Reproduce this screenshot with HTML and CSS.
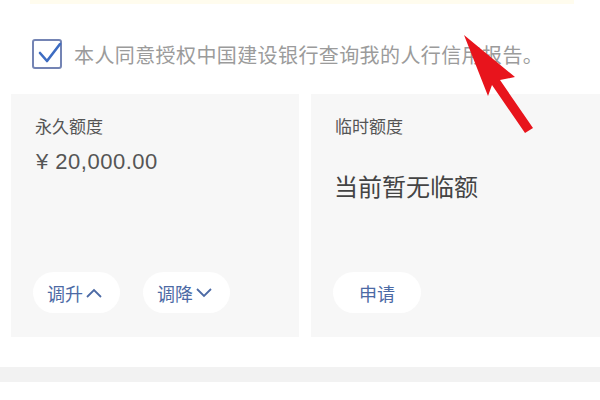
FILE: index.html
```html
<!DOCTYPE html>
<html lang="zh">
<head>
<meta charset="utf-8">
<link rel="stylesheet" href="styles.css">
</head>
<body>
<div class="page">
  <div class="topbar"></div>
  <div class="agree">
    <span class="checkbox">
      <svg width="34" height="34" viewBox="0 0 34 34"><path d="M7 15 L14 23 L27 6" fill="none" stroke="#3d6cc2" stroke-width="2.6" stroke-linecap="round" stroke-linejoin="round"/></svg>
    </span>
    <span class="agree-text">本人同意授权中国建设银行查询我的人行信用报告。</span>
  </div>
  <div class="cards">
    <div class="card">
      <div class="card-title">永久额度</div>
      <div class="amount">¥ 20,000.00</div>
      <div class="actions">
        <span class="pill">调升<svg class="chev" width="18" height="12" viewBox="0 0 18 12"><path d="M2 10 L9 3 L16 10" fill="none" stroke="#4c6aa5" stroke-width="1.8"/></svg></span>
        <span class="pill">调降<svg class="chev" width="18" height="12" viewBox="0 0 18 12"><path d="M2 2 L9 9 L16 2" fill="none" stroke="#4c6aa5" stroke-width="1.8"/></svg></span>
      </div>
    </div>
    <div class="card">
      <div class="card-title">临时额度</div>
      <div class="none-text">当前暂无临额</div>
      <div class="actions">
        <span class="pill pill-center">申请</span>
      </div>
    </div>
  </div>
  <div class="divider"></div>
  <svg class="arrow" width="600" height="400" viewBox="0 0 600 400">
    <polygon points="464,35 515,77 500,80 533,128 525,133 492,85 488,96" fill="#e8141c"/>
  </svg>
</div>
</body>
</html>
```
FILE: styles.css
```css
html, body {
  margin: 0;
  padding: 0;
  background: #ffffff;
}
body {
  font-family: "Noto Sans CJK SC", "Noto Sans", sans-serif;
  width: 600px;
  height: 400px;
  overflow: hidden;
}
.page {
  position: relative;
  width: 600px;
  height: 400px;
}
.topbar {
  height: 4px;
  margin: 0 26px 0 30px;
  background: #fffcee;
}
.agree {
  display: flex;
  align-items: center;
  margin-top: 35px;
  padding-left: 32px;
  height: 30px;
}
.checkbox {
  position: relative;
  width: 26px;
  height: 26px;
  border: 2px solid #7484b4;
  border-radius: 3px;
  flex: none;
}
.checkbox svg {
  position: absolute;
  left: -1px;
  top: -3px;
}
.agree-text {
  margin-left: 12px;
  font-size: 20px;
  color: #9b9b9b;
  letter-spacing: 0.4px;
}
.cards {
  display: flex;
  gap: 12px;
  margin-top: 25px;
  padding-left: 11px;
}
.card {
  flex: 1;
  height: 243px;
  background: #f7f7f7;
  display: flex;
  flex-direction: column;
  padding: 20px 22px 24px;
  box-sizing: border-box;
}
.card:last-child {
  flex: none;
  width: 289px;
}
.card-title {
  font-size: 17px;
  line-height: 24px;
  color: #555555;
  margin-left: 2px;
}
.amount {
  margin-top: 10px;
  margin-left: 3px;
  font-family: "Liberation Sans", "Roboto", sans-serif;
  font-size: 22px;
  line-height: 28px;
  letter-spacing: 0.5px;
  color: #555555;
}
.none-text {
  margin-top: 32px;
  margin-left: 1px;
  font-size: 24px;
  line-height: 32px;
  color: #444444;
}
.actions {
  margin-top: auto;
  display: flex;
  gap: 23px;
}
.pill {
  display: inline-flex;
  align-items: center;
  height: 41px;
  width: 87px;
  box-sizing: border-box;
  padding-left: 14px;
  border-radius: 21px;
  background: #ffffff;
  font-size: 18px;
  color: #4c6aa5;
}
.chev {
  margin-left: 2px;
}
.pill-center {
  justify-content: center;
  padding-left: 0;
  width: 88px;
}
.divider {
  margin-top: 30px;
  height: 15px;
  background: #f2f2f2;
}
.arrow {
  position: absolute;
  left: 0;
  top: 0;
  pointer-events: none;
}
```
